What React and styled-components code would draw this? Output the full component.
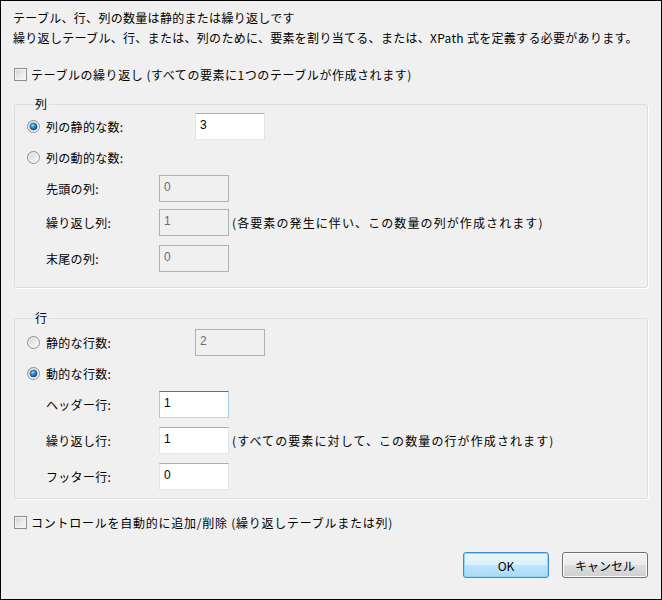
import React from 'react';
import styled, { createGlobalStyle } from 'styled-components';

const GlobalStyle = createGlobalStyle`
  body {
    margin: 0;
    font-family: "Noto Sans CJK JP", "Noto Sans", sans-serif;
    font-size: 12px;
    color: #000;
  }
`;

const Dialog = styled.div`
  width: 662px;
  height: 600px;
  box-sizing: border-box;
  border: 1px solid #000;
  background: #f0f0f0;
  padding: 7px 13px 0 12px;
  display: flex;
  flex-direction: column;
  letter-spacing: 0.3px;
`;

const Intro = styled.p`
  margin: 0;
  line-height: 20px;
  white-space: nowrap;
`;

const CheckRow = styled.label`
  display: flex;
  align-items: center;
  gap: 4px;
  height: 20px;
  margin-top: ${p => p.$gap}px;
  margin-left: 1px;
  white-space: nowrap;
  letter-spacing: ${p => p.$spacing}px;
`;

const CheckBox = styled.span`
  width: 13px;
  height: 13px;
  box-sizing: border-box;
  border: 1px solid #8f8f8f;
  background: linear-gradient(135deg, #d4d4d4 0%, #ececec 60%, #fafafa 100%);
  box-shadow: inset 0 0 0 1px #f3f3f3;
  flex: none;
`;

const Group = styled.fieldset`
  margin: ${p => p.$gap}px 0 0 1px;
  padding: ${p => p.$top}px 12px ${p => p.$bottom}px 12px;
  border: 1px solid #d8dfe4;
  border-radius: 3px;
  box-shadow: 1px 1px 0 #fff;
  min-width: 0;
`;

const Caption = styled.legend`
  margin-left: 6px;
  padding: 0 2px;
  line-height: 14px;
`;

const OptionRow = styled.div`
  display: flex;
  align-items: center;
  height: ${p => p.$height}px;
  margin-top: ${p => p.$gap || 0}px;
`;

const RadioLabel = styled.label`
  display: flex;
  align-items: center;
  gap: 6px;
  width: 168px;
  white-space: nowrap;
`;

const SubRow = styled.div`
  display: flex;
  align-items: center;
  height: 27px;
  margin-top: ${p => p.$gap}px;
  padding-left: 19px;
`;

const FieldLabel = styled.span`
  width: 113px;
  white-space: nowrap;
`;

const borders = {
  normal: 'border-color: #abadb3 #e2e3ea #e3e9ef #e2e3ea; background: #fff; color: #000;',
  focus: 'border-color: #3d7bad #a4c9e3 #b7d9ed #a4c9e3; background: #fff; color: #000;',
  disabled: 'border-color: #adb2b5; background: #f0f0f0; color: #6d6d6d;',
};

const NumberField = styled.div`
  width: 70px;
  height: 27px;
  box-sizing: border-box;
  border: 1px solid;
  ${p => borders[p.$state || 'normal']}
  padding: 3px 0 0 4px;
  line-height: 16px;
  font-family: "Liberation Sans", "Noto Sans CJK JP", sans-serif;
  font-size: 12px;
  letter-spacing: 0;
  flex: none;
`;

const Hint = styled.span`
  margin-left: 3px;
  white-space: nowrap;
  letter-spacing: 1.1px;
`;

const Footer = styled.div`
  display: flex;
  justify-content: flex-end;
  gap: 13px;
  margin-top: 20px;
`;

const Button = styled.button`
  width: 86px;
  height: 26px;
  box-sizing: border-box;
  border-radius: 3px;
  font-family: "Noto Sans CJK JP", "Noto Sans", sans-serif;
  font-size: 12px;
  color: #000;
  padding: 0;
  border: 1px solid ${p => (p.$primary ? '#3c8ccf' : '#707070')};
  background: ${p =>
    p.$primary
      ? 'linear-gradient(#eaf6fd 0%, #d9f0fc 50%, #bee6fd 51%, #a7d9f5 100%)'
      : 'linear-gradient(#f2f2f2 0%, #ebebeb 50%, #dddddd 51%, #cfcfcf 100%)'};
  box-shadow: inset 0 0 0 1px ${p => (p.$primary ? '#8ed7f9' : '#fcfcfc')};
`;

const Radio = ({ checked }) => (
  <svg width="13" height="13" viewBox="0 0 13 13" style={{ flex: 'none' }}>
    <defs>
      <linearGradient id="rbg" x1="0" y1="0" x2="1" y2="1">
        <stop offset="0" stopColor="#d0d0d0" />
        <stop offset="1" stopColor="#ffffff" />
      </linearGradient>
      <radialGradient id="rdot" cx="0.4" cy="0.35" r="0.7">
        <stop offset="0" stopColor="#8fdcff" />
        <stop offset="0.45" stopColor="#2a8ad4" />
        <stop offset="1" stopColor="#0b3e7a" />
      </radialGradient>
    </defs>
    <circle cx="6.5" cy="6.5" r="6" fill="url(#rbg)" stroke="#8e8f8f" strokeWidth="1" />
    <circle cx="6.5" cy="6.5" r="4.6" fill="none" stroke="#f4f4f4" strokeWidth="0.8" />
    {checked && <circle cx="6.5" cy="6.5" r="3.6" fill="url(#rdot)" stroke="#1c4f85" strokeWidth="0.6" />}
  </svg>
);

const App = () => {
  return (
    <>
      <GlobalStyle />
      <Dialog>
        <Intro>
          テーブル、行、列の数量は静的または繰り返しです
          <br />
          繰り返しテーブル、行、または、列のために、要素を割り当てる、または、XPath 式を定義する必要があります。
        </Intro>

        <CheckRow $gap={16} $spacing={0.55}>
          <CheckBox />
          テーブルの繰り返し (すべての要素に1つのテーブルが作成されます)
        </CheckRow>

        <Group $gap={13} $top={2} $bottom={15}>
          <Caption>列</Caption>
          <OptionRow $height={27}>
            <RadioLabel>
              <Radio checked />
              列の静的な数:
            </RadioLabel>
            <NumberField>3</NumberField>
          </OptionRow>
          <OptionRow $height={20} $gap={7}>
            <RadioLabel>
              <Radio />
              列の動的な数:
            </RadioLabel>
          </OptionRow>
          <SubRow $gap={8}>
            <FieldLabel>先頭の列:</FieldLabel>
            <NumberField $state="disabled">0</NumberField>
          </SubRow>
          <SubRow $gap={7}>
            <FieldLabel>繰り返し列:</FieldLabel>
            <NumberField $state="disabled">1</NumberField>
            <Hint>(各要素の発生に伴い、この数量の列が作成されます)</Hint>
          </SubRow>
          <SubRow $gap={9}>
            <FieldLabel>末尾の列:</FieldLabel>
            <NumberField $state="disabled">0</NumberField>
          </SubRow>
        </Group>

        <Group $gap={23} $top={4} $bottom={8}>
          <Caption>行</Caption>
          <OptionRow $height={27}>
            <RadioLabel>
              <Radio />
              静的な行数:
            </RadioLabel>
            <NumberField $state="disabled">2</NumberField>
          </OptionRow>
          <OptionRow $height={20} $gap={7}>
            <RadioLabel>
              <Radio checked />
              動的な行数:
            </RadioLabel>
          </OptionRow>
          <SubRow $gap={8}>
            <FieldLabel>ヘッダー行:</FieldLabel>
            <NumberField $state="focus">1</NumberField>
          </SubRow>
          <SubRow $gap={9}>
            <FieldLabel>繰り返し行:</FieldLabel>
            <NumberField>1</NumberField>
            <Hint>(すべての要素に対して、この数量の行が作成されます)</Hint>
          </SubRow>
          <SubRow $gap={9}>
            <FieldLabel>フッター行:</FieldLabel>
            <NumberField>0</NumberField>
          </SubRow>
        </Group>

        <CheckRow $gap={13} $spacing={0.75}>
          <CheckBox />
          コントロールを自動的に追加/削除 (繰り返しテーブルまたは列)
        </CheckRow>

        <Footer>
          <Button $primary>OK</Button>
          <Button>キャンセル</Button>
        </Footer>
      </Dialog>
    </>
  );
};

export default App;
